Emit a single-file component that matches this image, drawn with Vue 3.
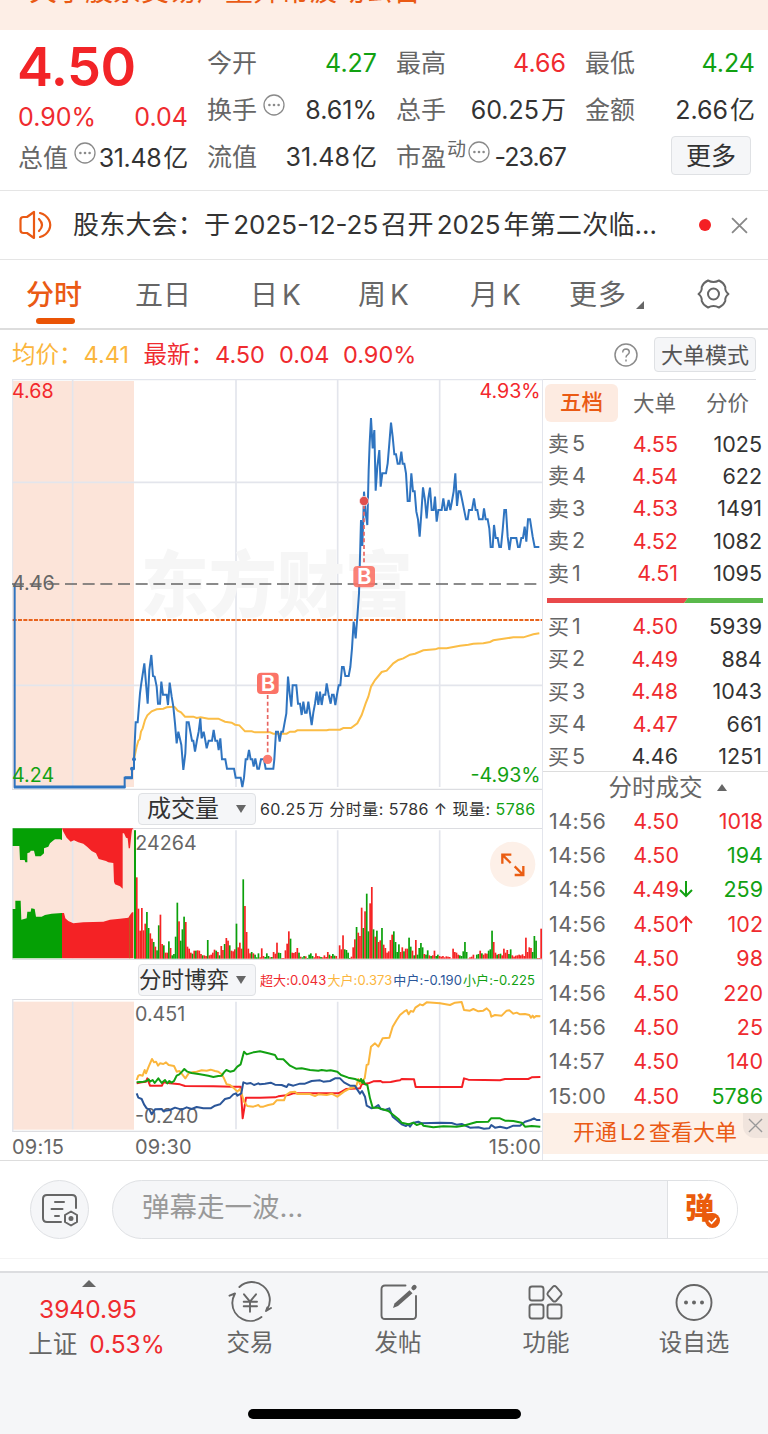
<script setup>
import { h } from 'vue'

const More = () => h('svg', { class: 'dots', viewBox: '0 0 22 22' }, [
  h('circle', { cx: 11, cy: 11, r: 10, fill: 'none', stroke: '#8a8a8a', 'stroke-width': 1.3 }),
  ...[6.4, 11, 15.6].map((cx) => h('circle', { cx, cy: 11, r: 1.3, fill: '#8a8a8a' })),
])

const shift = (dx, coords) =>
  coords.trim().split(/\s+/).map((p) => {
    const [x, y] = p.split(',')
    return `${Number(x) + dx},${y}`
  }).join(' ')
const join = (morning, afternoon) => `${shift(0, morning)} ${shift(780, afternoon)}`

const price = join(
  `44,642 44,1251 374,1251 374,1223 396,1223 396,1196 402,1196 402,1168 407,1057 413,1057 420,970 423,946 433,880 443,1001 448,900 454,855 459,918 464,920 470,950 474,1001 480,1001 484,935 489,974 500,974 504,1005 509,938 515,980 520,1010 525,1060 530,1120 535,1085 544,1125 550,1200 556,1150 560,1057 566,1057 571,1085 576,1112 580,1112 585,1145 591,1110 596,1085 601,1045 605,1105 611,1085 616,1112 620,1135 626,1112 636,1112 641,1080 646,1112 652,1112 656,1140 661,1105 666,1168 676,1168 681,1196 702,1196 707,1223 722,1223 727,1251 732,1223 737,1168 742,1168 747,1140 752,1168 757,1168 761,1190 766,1165 772,1196 777,1196 783,1168 792,1168`,
  `17,1196 40,1196 43,1168 48,1085 54,1085 59,1115 64,1085 69,1085 74,1057 79,1030 84,920 89,970 94,1010 98,946 109,946 114,1001 120,1001 125,1035 130,995 135,1028 140,1028 145,995 155,1065 160,1028 165,1001 170,965 175,1005 180,965 185,1005 190,974 196,974 200,940 206,975 212,1001 216,974 221,974 226,1005 231,974 236,946 241,946 246,891 251,891 256,918 266,918 271,891 276,835 281,755 287,805 292,740 297,670 300,560 303,450 307,528 310,440 312,365 317,430 322,465 326,300 329,220 333,144 338,235 343,180 347,362 352,290 358,240 362,350 367,310 378,310 383,280 388,220 393,158 398,200 403,253 408,253 413,281 419,281 424,245 428,281 433,281 438,310 443,393 449,393 454,310 459,364 464,364 469,425 474,448 479,500 484,430 489,352 495,390 500,445 505,385 510,353 515,420 521,420 525,380 530,455 535,420 545,420 550,385 555,420 560,420 566,390 571,420 576,393 581,364 586,310 591,408 596,364 601,364 607,393 618,448 623,448 627,420 636,420 642,385 647,420 652,420 657,448 668,448 672,415 677,448 683,448 688,476 692,531 698,531 702,465 707,504 713,504 718,531 723,531 728,480 733,420 738,420 743,500 748,540 753,504 769,504 774,531 779,531 784,504 789,504 794,470 799,515 804,448 810,448 818,500 824,531 838,531`
)
const average = join(
  `402,1168 410,1130 415,1112 419,1108 423,1085 428,1075 435,1050 442,1036 455,1024 470,1018 490,1016 500,1012 520,1010 525,1012 533,1022 543,1027 555,1040 580,1040 590,1044 602,1042 625,1046 655,1046 675,1055 695,1058 705,1064 718,1066 735,1084 755,1084 765,1087`,
  `0,1087 30,1087 40,1091 80,1091 90,1085 105,1085 112,1081 200,1081 207,1079 240,1079 250,1074 273,1074 292,1060 305,1035 317,1000 325,980 333,950 345,930 365,906 380,902 400,880 415,870 430,865 450,854 465,851 490,841 525,838 535,835 560,835 600,827 625,824 640,821 670,820 690,816 700,811 740,805 760,802 790,802 820,793 838,790`
)

const bars = (start, pitch, list) => list.split(' ').map((b, i) => ({
  x: start + i * pitch - 2.3, h: Number(b.slice(1)), color: b[0] === 'r' ? '#f52424' : '#0ba00b',
}))
const volume = [
  ...bars(405, 5.07, 'g384 r244 r150 r84 r152 r85 r105 g140 g92 r76 r60 g50 r36 g25 g100 r132 r44 g40 r18 r18 g52 r32 g10 g14 g66 g168 r112 g54 g88 g126 r110 r36 r30 r18 g15 r24 g24 r25 r24 r14 g10 r10 r8 g56 r10 r12 r18 r27 g24 r20 g10 r38 r26 g44 r62 r54 g40 r24 r22 r28 g105 r34 r48 r30 g238 r158 r80 r30 r16 g20 r16 g12 g4 g16 r4'),
  ...bars(785, 5.08, 'r31 r8 g5 g16 g8 r4 g5 r20 r15 r48 g18 g17 r2 r2 r25 r45 r82 g60 r18 r17 r20 r32 g18 r6 g4 g8 r7 g2 g12 g16 g8 r4 r16 r8 r7 g5 r4 r10 r5 r20 g12 r8 g14 g9 r8 r1 r40 r28 r70 g28 g26 g18 g2 r6 r34 r58 g95 r78 r68 r153 g92 r142 g195 g82 r166 r215 g88 r66 g84 r50 r55 g92 r42 r32 r18 r22 r56 r72 g82 g50 g20 g43 r20 r34 g22 r30 r30 g63 g36 r24 g10 r56 g12 g32 g47 g34 r14 g12 g25 r10 g8 r10 r24 g8 g12 r8 r6 r8 r4 r7 r6 r5 r1 r30 r20 r18 r12 g10 g8 g22 g50 g20 r1 r4 r6 r12 r1 g12 g14 r24 g16 r12 r16 r15 g24 g28 g84 r50 r18 g12 r14 g15 r10 r30 r18 r26 g14 g28 r10 r6 r9 r10 r12 r10 r13 r8 r63 r20 r34 r32 g20 g68 g54 r2 r2 r90'),
]

const flows = [
  { color: '#f51f24', points: join(
    '410,385 425,382 438,380 442,370 450,392 486,392 490,382 510,385 540,388 555,393 640,394 700,395 722,395 728,490 738,428 780,428',
    '0,428 45,427 55,424 85,420 100,415 235,415 245,410 258,402 300,400 305,388 325,385 340,379 362,378 368,382 392,381 410,377 420,376 425,372 462,373 467,396 606,396 612,370 625,374 720,376 735,372 805,372 815,367 841,366') },
  { color: '#fbb63d', points: join(
    '410,375 415,362 420,360 428,362 434,345 438,355 446,335 456,312 462,322 468,320 474,332 480,325 490,327 498,322 506,330 522,333 530,350 538,348 545,356 556,370 566,355 576,352 590,350 605,346 620,347 632,344 645,348 655,350 665,358 672,370 680,388 690,390 700,398 712,410 720,402 726,420 732,440 742,453 760,455 775,450',
    '0,455 10,455 25,450 40,447 50,436 72,436 78,420 90,412 105,410 112,417 150,417 165,423 175,418 200,420 215,416 232,425 245,415 255,408 270,400 288,396 295,372 300,388 308,376 314,370 320,330 325,328 333,275 345,265 355,275 368,250 388,248 398,215 410,195 420,180 432,170 440,165 446,178 452,168 460,170 466,158 475,152 480,148 488,151 500,142 540,145 570,150 585,143 605,141 612,165 630,167 640,162 655,169 670,167 680,160 690,170 694,185 705,180 725,182 740,167 748,166 760,176 770,173 780,178 795,177 808,180 813,188 818,182 822,188 828,183 841,184') },
  { color: '#2b5699', points: join(
    '410,415 415,428 425,432 432,448 440,460 448,463 455,478 465,463 485,462 490,468 510,465 525,458 545,464 560,457 575,462 590,456 610,460 632,460 645,452 660,448 675,432 690,428 700,418 708,415 712,422 724,415 730,382 740,386 752,384 762,390 775,385',
    '0,388 15,386 32,383 45,389 65,390 80,396 85,388 100,392 120,386 135,386 155,378 180,376 190,380 210,378 225,370 240,370 252,382 270,392 285,392 292,404 300,416 306,408 315,425 320,452 335,460 345,457 355,450 362,462 375,465 388,460 398,485 410,495 425,508 438,513 445,508 450,515 458,504 475,500 485,505 540,503 575,504 590,509 605,507 630,518 655,517 672,521 688,520 694,510 705,518 720,515 740,520 760,512 780,512 795,500 812,495 822,490 830,495 841,495') },
  { color: '#12a112', points: join(
    '410,382 430,380 440,378 446,373 450,380 458,375 464,384 475,370 485,384 495,375 502,385 508,378 515,383 522,378 530,362 538,358 546,350 553,342 562,350 575,354 600,358 625,362 640,366 655,363 665,362 672,352 679,345 690,350 702,347 712,335 722,328 732,290 740,298 760,292',
    '0,289 25,295 45,300 52,312 70,313 90,332 108,341 125,340 150,345 175,347 185,345 200,347 212,346 232,350 243,360 265,368 285,372 300,378 303,372 307,384 310,376 315,388 322,390 330,430 338,458 352,458 385,468 400,480 415,492 425,503 445,508 460,503 470,510 485,505 490,512 520,517 550,514 590,515 610,512 650,501 685,500 693,490 720,490 735,497 760,498 785,503 795,515 815,513 841,515') },
]

const asks = [['卖5', '4.55', '1025'], ['卖4', '4.54', '622'], ['卖3', '4.53', '1491'], ['卖2', '4.52', '1082'], ['卖1', '4.51', '1095']]
const bids = [['买1', '4.50', '5939'], ['买2', '4.49', '884'], ['买3', '4.48', '1043'], ['买4', '4.47', '661'], ['买5', '4.46', '1251']]
const trades = [
  ['14:56', '4.50', '', '1018', 'up'], ['14:56', '4.50', '', '194', 'down'], ['14:56', '4.49', '↓', '259', 'down'],
  ['14:56', '4.50', '↑', '102', 'up'], ['14:56', '4.50', '', '98', 'up'], ['14:56', '4.50', '', '220', 'up'],
  ['14:56', '4.50', '', '25', 'up'], ['14:57', '4.50', '', '140', 'up'], ['15:00', '4.50', '', '5786', 'down'],
]
</script>

<template>
  <div class="page">
    <div class="strip"><span>关于股票交易严重异常波动公告</span><i>✕</i></div>

    <section class="quote">
      <div class="main-quote">
        <b class="last">4.50</b>
        <div class="cell up chg"><span>0.90%</span><span>0.04</span></div>
        <div class="cell r3"><label>总值</label><More /><em>31.48<u>亿</u></em></div>
      </div>
      <div class="stats">
        <div class="cell"><label>今开</label><em class="down">4.27</em></div>
        <div class="cell"><label>最高</label><em class="up">4.66</em></div>
        <div class="cell"><label>最低</label><em class="down">4.24</em></div>
        <div class="cell"><label>换手</label><More /><em>8.61%</em></div>
        <div class="cell"><label>总手</label><em>60.25<u>万</u></em></div>
        <div class="cell"><label>金额</label><em>2.66<u>亿</u></em></div>
        <div class="cell"><label>流值</label><em>31.48<u>亿</u></em></div>
        <div class="cell pe"><label>市盈</label><sup>动</sup><More /><em>-23.67</em></div>
        <div class="cell end"><button class="more">更多</button></div>
      </div>
    </section>

    <section class="news">
      <svg class="horn" viewBox="0 0 34 30" fill="none" stroke="#ea5a14" stroke-width="2.2" stroke-linejoin="round" stroke-linecap="round">
        <path d="M15 2v26L8 23H4.500Q1.500 23 1.500 20V10Q1.500 7 4.500 7H8Z" /><path d="M20 9q6 6 0 12M21 3q6 1.500 9 7 2.500 5 0 10-3 5.500-9 7" />
      </svg>
      <span class="headline">股东大会：于<n>2025-12-25</n>召开<n>2025</n>年第二次临…</span>
      <i class="dot"></i>
      <svg class="x" viewBox="0 0 16 16"><path d="M1 1l14 14M15 1L1 15" stroke="#888" stroke-width="1.700" /></svg>
    </section>

    <nav class="tabs">
      <span class="on">分时</span><span>五日</span><span>日<n>K</n></span><span>周<n>K</n></span><span>月<n>K</n></span><span>更多<i class="tri"></i></span>
      <svg class="gear" viewBox="0 0 32 32" fill="none" stroke="#666" stroke-width="2" stroke-linejoin="round">
        <path d="M10.500 2.500Q16 5.500 21.500 2.500Q26 4.500 27.800 9Q27.200 13 31 16Q27.200 19 27.800 23Q26 27.500 21.500 29.500Q16 26.500 10.500 29.500Q6 27.500 4.200 23Q4.800 19 1 16Q4.800 13 4.200 9Q6 4.500 10.500 2.500Z" /><circle cx="16" cy="16" r="5.500" />
      </svg>
    </nav>

    <section class="info">
      <span class="avg">均价：</span><span class="avg val1">4.41</span>
      <span class="up lab">最新：</span><span class="up val2">4.50</span><span class="up val3">0.04</span><span class="up">0.90%</span>
      <svg class="help" viewBox="0 0 24 24" fill="none" stroke="#8b8b8b" stroke-width="1.500"><circle cx="12" cy="12" r="11" /><path d="M8.700 9.500q.2-3.500 3.400-3.500 3.200.1 3.200 3.100 0 1.500-1.600 2.500Q12 12.600 12 14.500M12 16.600v2" /></svg>
      <button class="mode">大单模式</button>
    </section>

    <main class="board">
      <div class="charts">
        <svg class="price" viewBox="36 27 1590 1233">
          <rect x="38" y="33" width="364" height="1218" fill="#fce4d9" />
          <g stroke="#e3e5ec" stroke-width="5" fill="none">
            <path d="M36 28.500H1626" stroke-width="4" /><path d="M38 27V1260" stroke-width="3" /><path d="M218 30V1251M708 30V1251M1013 30V1251M1319 30V1251M38 337H1626M38 946H1626" />
            <path d="M36 1258.500H1626" stroke="#dcdde1" />
          </g>
          <text class="mark" x="422" y="722" textLength="816" lengthAdjust="spacingAndGlyphs">东方财富</text>
          <path d="M36 642H1615" stroke="#666" stroke-width="5" stroke-dasharray="36 17" />
          <path d="M38 750H1626" stroke="#e8631c" stroke-width="6" stroke-dasharray="12 4" />
          <polyline :points="average" fill="none" stroke="#fbbd46" stroke-width="6" />
          <polyline :points="price" fill="none" stroke="#2f74c0" stroke-width="6" />
          <path d="M42 1251H376M374 1223H398" stroke="#2f74c0" stroke-width="9" />
          <circle cx="396" cy="1196" r="6" fill="#2f74c0" /><circle cx="402" cy="1168" r="6" fill="#2f74c0" />
          <path d="M803 975V1155M1092 405V585" stroke="#e86460" stroke-width="5" stroke-dasharray="12 8" />
          <circle cx="803" cy="1168" r="14" fill="#fc7b70" /><circle cx="1092" cy="393" r="14" fill="#e0504f" stroke="#fff" stroke-width="2" />
          <g fill="#fb7367"><rect x="771" y="908" width="65" height="64" rx="12" /><rect x="1060" y="588" width="65" height="64" rx="12" opacity=".9" /></g>
          <text class="buy" x="804" y="963">B</text><text class="buy" x="1093" y="643">B</text>
          <g class="tag">
            <text x="36" y="84" fill="#f3282c">4.68</text><text x="36" y="661">4.46</text><text x="36" y="1235" fill="#12a112">4.24</text>
            <text x="1622" y="84" fill="#f3282c" text-anchor="end">4.93%</text><text x="1622" y="1235" fill="#12a112" text-anchor="end">-4.93%</text>
          </g>
        </svg>

        <div class="bar">
          <button>成交量<i></i></button>
          <p class="volinfo"><n>60.25</n><n class="unit">万</n> 分时量: <n>5786</n> ↑ 现量: <n class="down">5786</n></p>
        </div>
        <svg class="vol" viewBox="36 129 1590 396">
          <rect x="38" y="130" width="364" height="390" fill="#fce4d9" />
          <path d="M36 130H1626M36 524H1626" stroke="#dcdde1" stroke-width="4" />
          <path d="M38 129V524M218 136V520M708 136V520M1013 136V520M1319 136V520" stroke="#e3e5ec" stroke-width="5" />
          <g fill="#05a005">
            <path d="M38 130V183H58L60 225H74L76 232H82V205L90 202 92 197H102L106 214H122L132 205V190L145 185 150 175 158 168 165 163H180L186 165V130Z" />
            <path d="M38 520V372H46V347H62L64 404 80 400 82 380H92L94 370 104 372 108 395H125L135 390 155 386 186 384V520Z" />
          </g>
          <g fill="#f42225">
            <path d="M186 130L190 140 200 158 212 170 222 166 235 172 250 176 262 186 275 198 288 205 296 222 318 228 325 232 340 234 342 290 345 298 360 304 368 311V145H372L378 158 383 160 386 190H390L394 150 396 135 400 130Z" />
            <path d="M186 520V384H192L196 400 205 408 220 415 250 412 310 410 330 404 360 401 385 398 390 390 396 382H400V520Z" />
          </g>
          <path d="M389 398V520" stroke="#9a7b16" stroke-width="2" />
          <rect v-for="(b, i) in volume" :key="i" :x="b.x" :y="521 - b.h" width="5.100" :height="b.h" :fill="b.color" />
          <path d="M405 136V520" stroke="#0ba00b" stroke-width="6" />
          <text class="tag" x="406" y="194">24264</text>
          <circle cx="1538" cy="238" r="68" fill="#fdf0e8" />
          <path d="M1507 236V209H1534M1509 211L1532 234M1544 270H1570V243M1568 268L1544 244" fill="none" stroke="#ea5d12" stroke-width="7" />
        </svg>

        <div class="bar flow">
          <button>分时博弈<i></i></button>
          <p class="flowinfo"><span class="c1">超大:<n>0.043</n></span><span class="c2">大户:<n>0.373</n></span><span class="c3">中户:<n>-0.190</n></span><span class="c4">小户:<n>-0.225</n></span></p>
        </div>
        <svg class="game" viewBox="36 132 1590 399">
          <rect x="38" y="140" width="364" height="384" fill="#fce4d9" />
          <path d="M36 133H1626M36 529H1626" stroke="#dcdde1" stroke-width="4" />
          <path d="M38 132V530M218 140V523M708 140V523M1013 140V523M1319 140V523" stroke="#e3e5ec" stroke-width="5" />
          <g class="tag"><text x="405" y="197">0.451</text><text x="405" y="503">-0.240</text></g>
          <polyline v-for="f in flows" :key="f.color" :points="f.points" fill="none" :stroke="f.color" stroke-width="6" stroke-linejoin="round" />
        </svg>
        <div class="axis"><span>09:15</span><span class="open">09:30</span><span class="close">15:00</span></div>
      </div>

      <aside class="book">
        <div class="booktabs"><b>五档</b><span>大单</span><span>分价</span></div>
        <div v-for="r in asks" :key="r[0]" class="lvl"><span>{{ r[0][0] }}<n>{{ r[0][1] }}</n></span><em class="up">{{ r[1] }}</em><em>{{ r[2] }}</em></div>
        <div class="ratio"><svg viewBox="0 0 216 5" preserveAspectRatio="none"><path d="M0 0H141L137 5H0Z" fill="#e9494b" /><path d="M141 0H216V5H137Z" fill="#5ab94b" /></svg></div>
        <div v-for="r in bids" :key="r[0]" class="lvl"><span>{{ r[0][0] }}<n>{{ r[0][1] }}</n></span><em :class="{ up: r[1] !== '4.46' }">{{ r[1] }}</em><em>{{ r[2] }}</em></div>
        <div class="ttitle">分时成交<i></i></div>
        <div v-for="(t, i) in trades" :key="i" class="trade">
          <span>{{ t[0] }}</span>
          <em class="up">{{ t[1] }}</em>
          <span class="arrow"><svg v-if="t[2]" :class="t[4]" viewBox="0 0 14 18" fill="none" stroke="currentColor" stroke-width="2"><path :d="t[2] === '↓' ? 'M7 1v15M1 10l6 6 6-6' : 'M7 17V2M1 8l6-6 6 6'" /></svg></span>
          <em :class="t[4]">{{ t[3] }}</em>
        </div>
        <div class="l2"><span>开通<n>L2</n>查看大单</span><i><svg viewBox="0 0 16 16"><path d="M1 1l14 14M15 1L1 15" stroke="#999" stroke-width="1.400" /></svg></i></div>
      </aside>
    </main>

    <section class="chat">
      <div class="round">
        <svg viewBox="0 0 36 34" fill="none" stroke="#666" stroke-width="2" stroke-linecap="round">
          <path d="M34 15V6q0-4-4-4H5Q1 2 1 6V25q0 4 4 4H19M13 9h9M9.500 16h11M13 23h4" /><path d="M29 18.500l6 3.500v7l-6 3.500-6-3.500v-7Z" stroke-linejoin="round" /><circle cx="29" cy="25.500" r="1.500" fill="#666" />
        </svg>
      </div>
      <div class="input"><span>弹幕走一波…</span><div class="send"><b>弹</b><svg viewBox="0 0 16 16"><circle cx="8" cy="8" r="8" fill="#ea5b0c" /><path d="M4 8l3 3 5-5.500" fill="none" stroke="#fff" stroke-width="1.700" /></svg></div></div>
    </section>

    <footer class="dock">
      <div class="index"><i></i><em>3940.95</em><p>上证<em>0.53%</em></p></div>
      <div class="item">
        <svg viewBox="0 0 42 38" fill="none" stroke="#666" stroke-width="1.900" stroke-linejoin="round" stroke-linecap="round"><path d="M10.400 4A18 18 0 0 1 38 26.700M42 25L37 28L38.300 24.500M32.500 34A18 18 0 0 1 3.300 20Q3.300 15.500 6 10.500L.5 12.700" /><path d="M15 11.300l6 7.400 6-7.400M14.700 18.700H28M14.700 23.300H28M21 18.700v10" /></svg>交易
      </div>
      <div class="item">
        <svg viewBox="0 0 42 38" fill="none" stroke="#666" stroke-width="1.900" stroke-linecap="round"><path d="M28.500 2.500H8Q4.500 2.500 4.500 6V32.500q0 3.500 3.500 3.500H35.500q3.500 0 3.500-3.500V13" /><path d="M36.600 5l.8-.8" stroke-width="4.500" /><path d="M32.500 7.200L35.500 10.200 21 23 16 25 17.500 20.500Z" fill="#666" stroke="none" /></svg>发帖
      </div>
      <div class="item">
        <svg viewBox="0 0 42 38" fill="none" stroke="#666" stroke-width="1.900" stroke-linejoin="round"><rect x="4.500" y="3.500" width="14" height="14" rx="2.500" /><rect x="4.500" y="21.500" width="14" height="14" rx="2.500" /><rect x="22.500" y="21.500" width="14" height="14" rx="2.500" /><path d="M29.500 3q1 0 1.500.7l5 5.700q1.200 1.500 0 3l-5 5.600q-1.500 1.200-3 0l-5-5.600q-1.200-1.500 0-3l5-5.700q.5-.7 1.500-.7Z" /></svg>功能
      </div>
      <div class="item">
        <svg viewBox="0 0 42 38" fill="none" stroke="#666" stroke-width="1.900"><circle cx="21" cy="19.500" r="17.500" /><g fill="#666" stroke="none"><circle cx="13" cy="19.500" r="2" /><circle cx="21" cy="19.500" r="2" /><circle cx="29" cy="19.500" r="2" /></g></svg>设自选
      </div>
      <div class="home"></div>
    </footer>
  </div>
</template>

<style>
html, body { margin: 0; background: #fff; }
.dots { width: 22px; height: 22px; flex: none; position: relative; top: -5px; }
</style>

<style scoped>
.page { width: 768px; height: 1434px; overflow: hidden; background: #fff; color: #333; font-family: Inter, "Noto Sans CJK SC", sans-serif; display: flex; flex-direction: column; }
.page * { box-sizing: border-box; }
.page > * { flex: none; }
em, i { font-style: normal; }
u { text-decoration: none; margin-left: 2px; }
p { margin: 0; }
button { font-family: inherit; color: #333; background: #f5f6f8; border: 1px solid #dfe1e4; border-radius: 4px; padding: 0; }
.up { color: #ef2b2f !important; }
.down { color: #12a112 !important; }

.strip { height: 30px; background: #fdeee6; color: #ea5a14; font-size: 28px; display: flex; justify-content: space-between; align-items: flex-end; padding: 0 28px 19px 29px; line-height: 40px; }
.strip i { color: #aaa; font-size: 24px; line-height: 40px; }

.quote { height: 161px; padding: 10px 13px 0 18px; border-bottom: 1px solid #e5e5e5; display: flex; gap: 19px; font-size: 25px; }
.main-quote { width: 170px; height: 141px; display: flex; flex-direction: column; }
.last { font-size: 54px; line-height: 53px; height: 55px; font-weight: 600; color: #f22427; letter-spacing: -.4px; margin-left: -1px; }
.chg { height: 43px; }
.chg span { line-height: 40px; }
.stats { flex: 1; height: 141px; display: grid; grid-template-columns: repeat(3, 170px); grid-template-rows: repeat(3, 47px); column-gap: 19px; position: relative; top: -1px; }
.cell { display: flex; align-items: center; white-space: nowrap; line-height: 40px; }
.main-quote .cell { justify-content: space-between; }
.r3 { height: 41px; position: relative; top: -1px; letter-spacing: -.35px; }
.r3 label { letter-spacing: 0; }
.cell label { color: #666; font-size: 25px; margin-right: 6px; }
.cell em { margin-left: auto; }
.cell sup { font-size: 19px; line-height: 20px; color: #666; margin-left: -5px; margin-right: 2px; position: relative; top: -7px; }
.pe em { letter-spacing: -.9px; }
.end { justify-content: flex-end; }
.more { width: 80px; height: 39px; font-size: 25px; margin-right: 4px; line-height: 36px; position: relative; top: -1px; }

.news { height: 69px; border-bottom: 1px solid #e5e5e5; display: flex; align-items: center; padding: 0 20px 0 19px; }
.horn { width: 34px; height: 30px; }
.headline { font-size: 26px; margin-left: 20px; width: 626px; white-space: nowrap; letter-spacing: .2px; line-height: 40px; }
.headline n { margin: 0 3px; letter-spacing: 0; }
.dot { width: 12px; height: 12px; border-radius: 50%; background: #f42023; }
.x { width: 17px; height: 17px; margin-left: auto; }

.tabs { height: 70px; border-bottom: 2px solid #ddd; display: flex; align-items: center; font-size: 28px; color: #666; padding-left: 26px; line-height: 40px; }
.tabs span { width: 109px; height: 69px; display: flex; align-items: center; position: relative; white-space: nowrap; padding-top: 2px; }
.tabs span:nth-child(3) { padding-left: 6px; }
.tabs span:nth-child(4) { padding-left: 5px; }
.tabs span:nth-child(5) { padding-left: 8px; }
.tabs span:nth-child(6) { width: 126px; letter-spacing: 1px; margin-left: -2px; margin-right: 2px; }
.tabs n { margin-left: 4px; }
.tabs .on { color: #ea5a14; font-weight: 500; }
.tabs .on::after { content: ""; position: absolute; left: 10px; bottom: 5px; width: 39px; height: 6px; border-radius: 3px; background: #ea5405; }
.tri { border-left: 8px solid transparent; border-bottom: 8px solid #666; margin: 20px 0 0 9px; }
.gear { width: 33px; height: 32px; }

.info { height: 49px; display: flex; align-items: center; padding: 0 12px; font-size: 23.500px; line-height: 40px; white-space: nowrap; }
.avg { color: #fbb63d; }
.val1 { margin-left: 1px; width: 48px; }
.lab { margin-left: 12px; }
.val2 { margin-left: 1px; }
.val2, .val3 { width: 64px; }
.help { width: 24px; height: 24px; margin-left: auto; margin-right: 16px; }
.mode { width: 102px; height: 35px; font-size: 22px; line-height: 30px; color: #555; }

.board { height: 782px; display: flex; border-bottom: 1px solid #ddd; }
.charts { width: 530px; margin-left: 12px; }
.charts > svg { display: block; width: 530px; }
.price { height: 411px; }
.vol { height: 132px; }
.game { height: 133px; }
.tag { font-size: 59px; fill: #666; }
.mark { font-family: "Noto Sans CJK SC", sans-serif; font-weight: 900; font-size: 214px; fill: #f6f6f6; }
.buy { font-size: 66px; font-weight: 600; fill: #fff; text-anchor: middle; }
.bar { height: 38px; padding: 3px 0 0 126px; display: flex; align-items: flex-start; }
.bar button { width: 118px; height: 32px; font-size: 24px; line-height: 28px; display: flex; align-items: center; justify-content: space-between; padding: 0 9px 0 8px; white-space: nowrap; flex: none; }
.bar i { border: 5px solid transparent; border-top: 8px solid #666; border-bottom: 0; }
.bar.flow { height: 39px; padding-top: 4px; }
.flow button { padding-left: 0; font-size: 22.500px; }
.volinfo { font-size: 16px; line-height: 32px; white-space: nowrap; margin-left: 4px; letter-spacing: .45px; }
.unit { margin-left: 2px; }
.flowinfo { font-size: 13px; line-height: 33px; margin-left: 4px; width: 275px; display: flex; justify-content: space-between; white-space: nowrap; letter-spacing: .1px; }
.c1 { color: #ef2b2f; } .c2 { color: #fbb63d; } .c3 { color: #2b5699; } .c4 { color: #12a112; }
.axis { height: 28px; display: flex; font-size: 20px; line-height: 31px; color: #666; letter-spacing: .2px; }
.axis span { width: 53px; }
.open { margin-left: 70px; } .close { margin-left: auto; margin-right: 1px; text-align: right; }

.book { width: 226px; border-left: 1px solid #e3e5ec; font-size: 21.500px; }
.booktabs { height: 47px; border-top: 1px solid #dcdde1; display: flex; align-items: center; color: #666; padding-left: 2px; line-height: 37px; width: 213px; }
.booktabs b { width: 73px; height: 38px; border-radius: 6px; background: #fdebe1; color: #ea5a14; font-weight: 500; text-align: center; flex: none; }
.booktabs span { width: 73px; text-align: center; flex: none; }
.lvl { height: 32.400px; display: grid; grid-template-columns: 60px 70px 1fr; padding: 0 6px 0 5px; align-items: center; line-height: 32px; position: relative; top: 1px; }
.lvl span, .trade span { color: #666; }
.lvl span { font-size: 21px; }
.lvl n { margin-left: 3px; font-size: 21.500px; }
.lvl em, .trade em { text-align: right; }
.ratio { height: 21px; padding: 10px 0 0 4px; }
.ratio svg { display: block; width: 216px; height: 5px; }
.ttitle { height: 32px; border-top: 1px solid #ddd; display: flex; align-items: center; justify-content: center; color: #666; font-size: 23.500px; padding-left: 34px; padding-right: 10px; line-height: 31px; }
.ttitle i { border: 5px solid transparent; border-bottom: 7px solid #666; border-top: 0; margin-left: 14px; }
.trade { height: 34.400px; display: grid; grid-template-columns: 60px 70px 16px 1fr; padding: 0 5px 0 6px; align-items: center; line-height: 34px; position: relative; top: .5px; }
.trade > span:first-child { letter-spacing: .4px; }
.arrow { display: flex; }
.arrow svg { width: 14px; height: 18px; }
.l2 { height: 41px; margin-top: 1px; background: #fdf0e7; display: flex; justify-content: space-between; padding-left: 30px; color: #ea5a14; font-size: 22px; line-height: 38px; white-space: nowrap; }
.l2 n { margin: 0 3px; }
.l2 i { flex: none; width: 25px; height: 25px; background: #f0e4dd; border-bottom-left-radius: 12px; display: grid; place-items: center; }
.l2 i svg { width: 15px; height: 15px; }

.chat { height: 98px; padding: 19px 30px 0; display: flex; justify-content: space-between; border-bottom: 1px solid #f4f4f4; }
.round { width: 59px; height: 59px; border-radius: 50%; background: #f5f6f8; border: 1px solid #dfe1e4; display: grid; place-items: center; }
.round svg { width: 36px; height: 34px; }
.input { width: 626px; height: 59px; border: 1px solid #dfe1e4; border-radius: 30px; background: #f5f6f8; display: flex; justify-content: space-between; overflow: hidden; font-size: 27.500px; line-height: 53px; color: #999; }
.input span { padding-left: 29px; }
.send { width: 70px; background: #fff; border-left: 1px solid #dfe1e4; display: flex; padding-left: 17px; line-height: 55px; }
.send b { color: #ea5b0c; font-weight: 900; font-size: 29px; }
.send svg { width: 15px; height: 15px; margin: 32px 0 0 -9px; }

.dock { height: 163px; margin-top: 12px; border-top: 2px solid #dcdde0; background: #f5f6f8; display: flex; position: relative; color: #666; font-size: 24px; }
.index { width: 176px; text-align: center; font-size: 24.500px; line-height: 35px; }
.index i { display: block; width: 0; margin: 7px auto 0; border: 7px solid transparent; border-bottom: 7px solid #666; border-top: 0; position: relative; left: 1px; }
.index em { color: #ef2b2f; }
.index > em { display: block; height: 35px; margin-top: 5px; }
.index p { padding-left: 17px; white-space: nowrap; }
.index p em { margin-left: 12px; }
.item { width: 148px; display: flex; flex-direction: column; align-items: center; line-height: 34px; padding-top: 8px; gap: 5px; font-size: 23.500px; }
.item svg { width: 42px; height: 38px; margin-top: 2px; overflow: visible; }
.home { position: absolute; left: 248px; bottom: 15px; width: 273px; height: 10px; border-radius: 5px; background: #000; }
</style>
